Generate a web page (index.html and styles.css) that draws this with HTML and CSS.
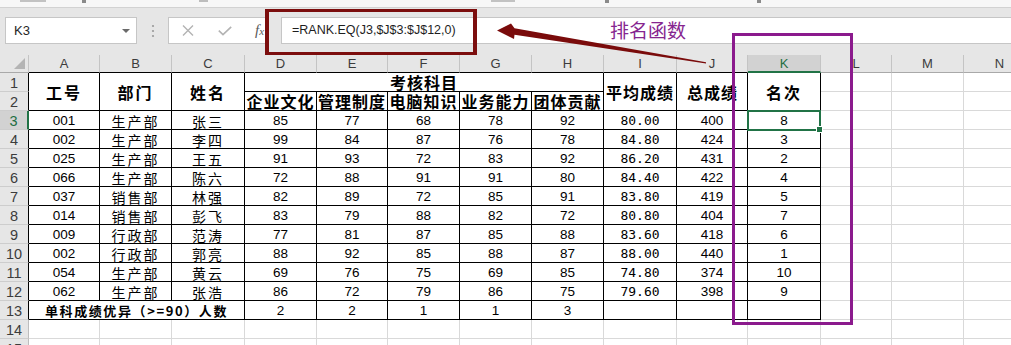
FILE: index.html
```html
<!DOCTYPE html>
<html lang="zh-CN">
<head>
<meta charset="utf-8">
<title>RANK.EQ</title>
<link rel="stylesheet" href="styles.css">
</head>
<body>
<div class="page">
  <div class="ribbon-edge">
    <span class="frag f1"></span><span class="frag f2"></span><span class="frag f3"></span><span class="frag f4"></span><span class="frag f5"></span><span class="frag f6"></span>
  </div>
  <div class="fbar">
    <div class="namebox"><span>K3</span><span class="caret"></span></div>
    <div class="grip">
      <svg width="4" height="14" viewBox="0 0 4 14"><circle cx="2" cy="2" r="1.1" fill="#9a9a9a"/><circle cx="2" cy="7" r="1.1" fill="#9a9a9a"/><circle cx="2" cy="12" r="1.1" fill="#9a9a9a"/></svg>
    </div>
    <div class="btnbox">
      <svg class="ic-x" width="12" height="11" viewBox="0 0 12 11"><path d="M1 0.5 L11 10.5 M11 0.5 L1 10.5" stroke="#b3b3b3" stroke-width="1.4" fill="none"/></svg>
      <svg class="ic-ok" width="14" height="10" viewBox="0 0 14 10"><path d="M0.8 4.6 L5 8.6 L13.2 0.8" stroke="#b3b3b3" stroke-width="1.6" fill="none"/></svg>
      <span class="fx"><i>f</i><span class="fxx">x</span></span>
    </div>
    <div class="finput">=RANK.EQ(J3,$J$3:$J$12,0)</div>
  </div>

  <div class="sheet">
    <div class="cell ch corner"><span class="tri"></span></div>
    <div class="cell ch tb">A</div>
    <div class="cell ch tb">B</div>
    <div class="cell ch tb">C</div>
    <div class="cell ch tb">D</div>
    <div class="cell ch tb">E</div>
    <div class="cell ch tb">F</div>
    <div class="cell ch tb">G</div>
    <div class="cell ch tb">H</div>
    <div class="cell ch tb">I</div>
    <div class="cell ch tb">J</div>
    <div class="cell ch selcol">K</div>
    <div class="cell ch">L</div>
    <div class="cell ch">M</div>
    <div class="cell ch">N</div>

    <div class="cell rh tb">1</div>
    <div class="cell t hd wide r2">工号</div>
    <div class="cell t hd wide r2">部门</div>
    <div class="cell t hd wide r2">姓名</div>
    <div class="cell t hd c5">考核科目</div>
    <div class="cell t hd r2">平均成绩</div>
    <div class="cell t hd r2 left">总成绩</div>
    <div class="cell t hd wide r2">名次</div>
    <div class="cell"></div><div class="cell"></div><div class="cell"></div>

    <div class="cell rh tb">2</div>
    <div class="cell t hd">企业文化</div>
    <div class="cell t hd">管理制度</div>
    <div class="cell t hd">电脑知识</div>
    <div class="cell t hd">业务能力</div>
    <div class="cell t hd">团体贡献</div>
    <div class="cell"></div><div class="cell"></div><div class="cell"></div>

    <div class="cell rh tb selrow">3</div>
    <div class="cell t">001</div><div class="cell t zh">生产部</div><div class="cell t zh">张三</div>
    <div class="cell t">85</div><div class="cell t">77</div><div class="cell t">68</div><div class="cell t">78</div><div class="cell t">92</div>
    <div class="cell t mono">80.00</div><div class="cell t">400</div><div class="cell t active">8</div>
    <div class="cell"></div><div class="cell"></div><div class="cell"></div>

    <div class="cell rh tb">4</div>
    <div class="cell t">002</div><div class="cell t zh">生产部</div><div class="cell t zh">李四</div>
    <div class="cell t">99</div><div class="cell t">84</div><div class="cell t">87</div><div class="cell t">76</div><div class="cell t">78</div>
    <div class="cell t mono">84.80</div><div class="cell t">424</div><div class="cell t">3</div>
    <div class="cell"></div><div class="cell"></div><div class="cell"></div>

    <div class="cell rh tb">5</div>
    <div class="cell t">025</div><div class="cell t zh">生产部</div><div class="cell t zh">王五</div>
    <div class="cell t">91</div><div class="cell t">93</div><div class="cell t">72</div><div class="cell t">83</div><div class="cell t">92</div>
    <div class="cell t mono">86.20</div><div class="cell t">431</div><div class="cell t">2</div>
    <div class="cell"></div><div class="cell"></div><div class="cell"></div>

    <div class="cell rh tb">6</div>
    <div class="cell t">066</div><div class="cell t zh">生产部</div><div class="cell t zh">陈六</div>
    <div class="cell t">72</div><div class="cell t">88</div><div class="cell t">91</div><div class="cell t">91</div><div class="cell t">80</div>
    <div class="cell t mono">84.40</div><div class="cell t">422</div><div class="cell t">4</div>
    <div class="cell"></div><div class="cell"></div><div class="cell"></div>

    <div class="cell rh tb">7</div>
    <div class="cell t">037</div><div class="cell t zh">销售部</div><div class="cell t zh">林强</div>
    <div class="cell t">82</div><div class="cell t">89</div><div class="cell t">72</div><div class="cell t">85</div><div class="cell t">91</div>
    <div class="cell t mono">83.80</div><div class="cell t">419</div><div class="cell t">5</div>
    <div class="cell"></div><div class="cell"></div><div class="cell"></div>

    <div class="cell rh tb">8</div>
    <div class="cell t">014</div><div class="cell t zh">销售部</div><div class="cell t zh">彭飞</div>
    <div class="cell t">83</div><div class="cell t">79</div><div class="cell t">88</div><div class="cell t">82</div><div class="cell t">72</div>
    <div class="cell t mono">80.80</div><div class="cell t">404</div><div class="cell t">7</div>
    <div class="cell"></div><div class="cell"></div><div class="cell"></div>

    <div class="cell rh tb">9</div>
    <div class="cell t">009</div><div class="cell t zh">行政部</div><div class="cell t zh">范涛</div>
    <div class="cell t">77</div><div class="cell t">81</div><div class="cell t">87</div><div class="cell t">85</div><div class="cell t">88</div>
    <div class="cell t mono">83.60</div><div class="cell t">418</div><div class="cell t">6</div>
    <div class="cell"></div><div class="cell"></div><div class="cell"></div>

    <div class="cell rh tb">10</div>
    <div class="cell t">002</div><div class="cell t zh">行政部</div><div class="cell t zh">郭亮</div>
    <div class="cell t">88</div><div class="cell t">92</div><div class="cell t">85</div><div class="cell t">88</div><div class="cell t">87</div>
    <div class="cell t mono">88.00</div><div class="cell t">440</div><div class="cell t">1</div>
    <div class="cell"></div><div class="cell"></div><div class="cell"></div>

    <div class="cell rh tb">11</div>
    <div class="cell t">054</div><div class="cell t zh">生产部</div><div class="cell t zh">黄云</div>
    <div class="cell t">69</div><div class="cell t">76</div><div class="cell t">75</div><div class="cell t">69</div><div class="cell t">85</div>
    <div class="cell t mono">74.80</div><div class="cell t">374</div><div class="cell t">10</div>
    <div class="cell"></div><div class="cell"></div><div class="cell"></div>

    <div class="cell rh tb">12</div>
    <div class="cell t">062</div><div class="cell t zh">生产部</div><div class="cell t zh">张浩</div>
    <div class="cell t">86</div><div class="cell t">72</div><div class="cell t">79</div><div class="cell t">86</div><div class="cell t">75</div>
    <div class="cell t mono">79.60</div><div class="cell t">398</div><div class="cell t">9</div>
    <div class="cell"></div><div class="cell"></div><div class="cell"></div>

    <div class="cell rh tb">13</div>
    <div class="cell t sum c3">单科成绩优异（&gt;=90）人数</div>
    <div class="cell t">2</div><div class="cell t">2</div><div class="cell t">1</div><div class="cell t">1</div><div class="cell t">3</div>
    <div class="cell t"></div><div class="cell t"></div><div class="cell t"></div>
    <div class="cell"></div><div class="cell"></div><div class="cell"></div>

    <div class="cell rh">14</div>
    <div class="cell"></div><div class="cell"></div><div class="cell"></div><div class="cell"></div><div class="cell"></div><div class="cell"></div><div class="cell"></div>
    <div class="cell"></div><div class="cell"></div><div class="cell"></div><div class="cell"></div><div class="cell"></div><div class="cell"></div><div class="cell"></div>

    <div class="cell rh">15</div>
    <div class="cell"></div><div class="cell"></div><div class="cell"></div><div class="cell"></div><div class="cell"></div><div class="cell"></div><div class="cell"></div>
    <div class="cell"></div><div class="cell"></div><div class="cell"></div><div class="cell"></div><div class="cell"></div><div class="cell"></div><div class="cell"></div>
  </div>

  <div class="mark-formula"></div>
  <div class="mark-rank"></div>
  <svg class="arrow" width="1011" height="345" viewBox="0 0 1011 345">
    <polygon points="497,30.5 511,23.5 514.5,28.3 706,62.2 706,63.6 514.5,34.8 514,39" fill="#7a0b0b"/>
  </svg>
  <div class="label">排名函数</div>
</div>
</body>
</html>
```

FILE: styles.css
```css
html, body {
  margin: 0;
  padding: 0;
  background: #ffffff;
}

body {
  width: 1011px;
  height: 345px;
  overflow: hidden;
  font-family: "Liberation Sans", "Noto Sans CJK SC", sans-serif;
}

.page {
  position: relative;
  width: 1011px;
  height: 345px;
  overflow: hidden;
}

/* remnant of the ribbon above the formula bar */
.ribbon-edge {
  height: 8px;
  box-sizing: border-box;
  background: #f7f7f7;
  border-bottom: 1px solid #d2d2d2;
  display: flex;
  align-items: flex-start;
}

.frag {
  display: block;
  height: 2px;
  background: #9a9a9a;
}
.f1 { width: 26px; margin-left: 20px; background: #c2c2c2; }
.f2 { width: 4px; margin-left: 36px; height: 3px; background: #8a8a8a; }
.f3 { width: 9px; margin-left: 113px; background: #bdbdbd; }
.f4 { width: 24px; margin-left: 283px; background: #c2c2c2; }
.f5 { width: 4px; margin-left: 90px; height: 3px; background: #8a8a8a; }
.f6 { width: 4px; margin-left: 148px; height: 3px; background: #8a8a8a; }

/* formula bar */
.fbar {
  height: 47px;
  box-sizing: border-box;
  background: #e6e6e6;
  display: flex;
  align-items: flex-start;
  padding: 9px 0 0 5px;
}

.namebox {
  width: 132px;
  height: 27px;
  box-sizing: border-box;
  background: #ffffff;
  border: 1px solid #c6c6c6;
  display: flex;
  align-items: center;
  justify-content: space-between;
  padding: 0 6px 0 8px;
  font-size: 13px;
  color: #262626;
}

.caret {
  width: 0;
  height: 0;
  border-left: 4px solid transparent;
  border-right: 4px solid transparent;
  border-top: 4px solid #6a6a6a;
}

.grip {
  width: 31px;
  height: 27px;
  display: flex;
  align-items: center;
  justify-content: center;
}

.btnbox {
  width: 101px;
  height: 27px;
  box-sizing: border-box;
  background: #ffffff;
  border: 1px solid #c6c6c6;
  display: flex;
  align-items: center;
  padding-left: 13px;
}

.ic-ok {
  margin-left: 24px;
}

.fx {
  margin-left: 23px;
  font-family: "Liberation Serif", serif;
  font-size: 15px;
  color: #5a5a5a;
  line-height: 1;
}
.fxx {
  font-style: italic;
  font-size: 11px;
}

.finput {
  flex: 1;
  margin-left: 12px;
  height: 27px;
  box-sizing: border-box;
  background: #ffffff;
  border: 1px solid #c6c6c6;
  border-right: none;
  padding-left: 10px;
  font-size: 12.5px;
  line-height: 25px;
  color: #1e1e1e;
  white-space: nowrap;
}

/* worksheet grid */
.sheet {
  display: grid;
  grid-template-columns: 29px 71px 72px 73px 72px 71px 72px 72px 72px 73px 71px 73px 71px 72px 72px;
  grid-template-rows: 18px repeat(15, 19px);
  width: 1036px;
}

.cell {
  box-sizing: border-box;
  border-right: 1px solid #d9d9d9;
  border-bottom: 1px solid #d9d9d9;
  display: flex;
  align-items: center;
  justify-content: center;
  font-size: 13.5px;
  line-height: 16px;
  color: #000000;
  white-space: nowrap;
  overflow: hidden;
  padding-top: 1px;
}

.ch {
  background: #e6e6e6;
  border-right-color: #c4c4c4;
  border-bottom-color: #a9a9a9;
  font-size: 13px;
  color: #3c3c3c;
}
.ch.tb { border-bottom-color: #000000; }

.corner {
  align-items: flex-end;
  justify-content: flex-end;
  padding: 0 3px 3px 0;
}
.tri {
  width: 0;
  height: 0;
  border-left: 11px solid transparent;
  border-bottom: 11px solid #b4b4b4;
}

.selcol {
  background: #d2d2d2;
  border-bottom: 2px solid #217346;
  color: #1f6e43;
  padding-top: 2px;
}

.rh {
  background: #e6e6e6;
  border-right-color: #bdbdbd;
  border-bottom-color: #cdcdcd;
  font-size: 14.5px;
  color: #3c3c3c;
}
.rh.tb { border-right-color: #000000; }
.rh.selrow {
  background: #d2d2d2;
  border-right: 2px solid #217346;
  color: #1f6e43;
}

.t {
  border-right-color: #000000;
  border-bottom-color: #000000;
}

.r2 { grid-row: span 2; }
.c5 { grid-column: span 5; }
.c3 { grid-column: span 3; }

.hd {
  font-family: "Noto Sans CJK SC", sans-serif;
  font-weight: 700;
  font-size: 16px;
  line-height: 17px;
  letter-spacing: 1px;
  padding-top: 1px;
}
.hd.wide { letter-spacing: 2px; }
.hd.left { justify-content: flex-start; padding-left: 10px; }

.zh {
  font-family: "Noto Sans CJK SC", sans-serif;
  font-size: 14px;
  letter-spacing: 2px;
}

.mono {
  font-family: "DejaVu Sans Mono", monospace;
  font-size: 13px;
}

.sum {
  font-family: "Noto Sans CJK SC", sans-serif;
  font-weight: 700;
  font-size: 13px;
  letter-spacing: 1.6px;
}

/* active cell K3 */
.active {
  position: relative;
  overflow: visible;
  z-index: 2;
}
.active::before {
  content: "";
  position: absolute;
  left: -1px;
  top: -1px;
  right: -1px;
  bottom: -2px;
  border: 2px solid #217346;
}
.active::after {
  content: "";
  position: absolute;
  right: -3px;
  bottom: -4px;
  width: 5px;
  height: 5px;
  background: #217346;
  border: 1px solid #ffffff;
}

/* annotations drawn over the screenshot */
.mark-formula {
  position: absolute;
  left: 265px;
  top: 9px;
  width: 212px;
  height: 46px;
  box-sizing: border-box;
  border-style: solid;
  border-width: 3px 4px;
  border-color: #7c0e0e;
  z-index: 5;
}

.mark-rank {
  position: absolute;
  left: 732px;
  top: 33px;
  width: 121px;
  height: 292px;
  box-sizing: border-box;
  border: 3px solid #8b1a8d;
  z-index: 5;
}

.arrow {
  position: absolute;
  left: 0;
  top: 0;
  z-index: 6;
  pointer-events: none;
}

.label {
  position: absolute;
  left: 610px;
  top: 17px;
  font-family: "Noto Sans CJK SC", sans-serif;
  font-size: 19px;
  line-height: 26px;
  color: #86258f;
  z-index: 6;
}
```
